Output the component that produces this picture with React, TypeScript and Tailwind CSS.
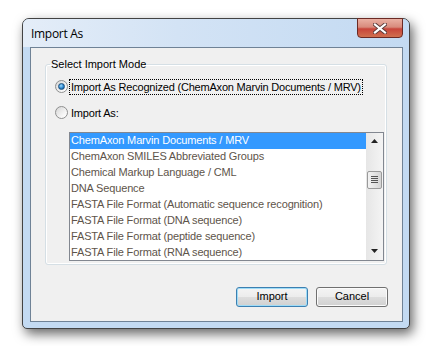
import React from 'react';

const formats = [
  'ChemAxon Marvin Documents / MRV',
  'ChemAxon SMILES Abbreviated Groups',
  'Chemical Markup Language / CML',
  'DNA Sequence',
  'FASTA File Format (Automatic sequence recognition)',
  'FASTA File Format (DNA sequence)',
  'FASTA File Format (peptide sequence)',
  'FASTA File Format (RNA sequence)',
];

function Radio({ checked }: { checked?: boolean }) {
  return (
    <span className="flex h-[13px] w-[13px] shrink-0 items-center justify-center rounded-full border border-[#8e8f8f] bg-[linear-gradient(135deg,#d6d6d6,#f7f7f7_70%,#ffffff)]">
      {checked && (
        <span className="h-[7px] w-[7px] rounded-full border border-[#1d4f7c] bg-[radial-gradient(circle_at_40%_35%,#9fdcff,#2a86cf_55%,#0f4478)]" />
      )}
    </span>
  );
}

function Button({ label, primary }: { label: string; primary?: boolean }) {
  return (
    <button
      className={`flex h-[20px] w-[72px] items-center justify-center rounded-[3px] border bg-[linear-gradient(#f4f4f4,#ececec_50%,#dedede_50%,#d0d0d0)] text-[11px] text-black ${
        primary
          ? 'border-[#3c7fb1] shadow-[inset_0_0_0_1px_#9fdcf7]'
          : 'border-[#707070] shadow-[inset_0_0_0_1px_#fbfbfb]'
      }`}
    >
      {label}
    </button>
  );
}

function ScrollBar() {
  return (
    <div className="flex w-[17px] shrink-0 flex-col items-center bg-[linear-gradient(90deg,#e6e6e6,#f4f4f4)]">
      {/* up arrow */}
      <div className="flex h-[17px] w-full items-center justify-center">
        <svg width="7" height="4" viewBox="0 0 7 4">
          <path d="M3.5 0 L7 4 L0 4 Z" fill="#222" />
        </svg>
      </div>
      <div className="h-[21px]" />
      {/* thumb */}
      <div className="flex h-[18px] w-[15px] flex-col items-center justify-center gap-[1px] rounded-[2px] border border-[#9a9a9a] bg-[linear-gradient(90deg,#f3f3f3,#e4e4e4_50%,#d5d5d5)]">
        <span className="h-[1px] w-[7px] bg-[#555]" />
        <span className="h-[1px] w-[7px] bg-[#555]" />
        <span className="h-[1px] w-[7px] bg-[#555]" />
        <span className="h-[1px] w-[7px] bg-[#555]" />
      </div>
      <div className="flex-1" />
      {/* down arrow */}
      <div className="flex h-[17px] w-full items-center justify-center">
        <svg width="7" height="4" viewBox="0 0 7 4">
          <path d="M0 0 L7 0 L3.5 4 Z" fill="#222" />
        </svg>
      </div>
    </div>
  );
}

export default function App() {
  return (
    <div className="h-[346px] w-[426px] bg-white pl-[22px] pt-[18px] font-['Liberation_Sans',sans-serif] text-[11px]">
      {/* Window */}
      <div className="flex h-[311px] w-[388px] flex-col rounded-t-[7px] rounded-b-[5px] border border-[#434343] bg-[#c3daf2] shadow-[3px_5px_12px_rgba(0,0,0,0.6)]">
        {/* Title bar */}
        <div className="flex h-[28px] items-start rounded-t-[6px] bg-[linear-gradient(90deg,#e4edf8,#d3e3f5_40%,#c3daf2)] pl-[8px] pr-[6px]">
          <span className="mt-[6px] font-['Open_Sans',sans-serif] text-[12px] tracking-[-0.3px] text-black">Import As</span>
          {/* Close button */}
          <div className="-mt-[1px] ml-auto flex h-[20px] w-[46px] items-center justify-center rounded-b-[4px] border border-[#6b2a24] bg-[linear-gradient(#eab0a3,#d88b7c_45%,#c8453a_55%,#d0704f)]">
            <svg width="14" height="11" viewBox="0 0 14 11">
              <path d="M2 1.5 L12 9.5 M12 1.5 L2 9.5" stroke="#5a3a38" strokeWidth="4" strokeLinecap="square" />
              <path d="M2 1.5 L12 9.5 M12 1.5 L2 9.5" stroke="#ffffff" strokeWidth="2.2" strokeLinecap="square" />
            </svg>
          </div>
        </div>

        {/* Client area */}
        <div className="mb-[6px] ml-[7px] mr-[6px] flex flex-1 flex-col border border-[#6f8296] bg-[#f0f0f0]">
          <fieldset className="ml-[14px] mr-[15px] mt-[8px] rounded-[3px] border border-[#d5dfe5] pb-[3px] pl-[4px] pr-[2px] shadow-[inset_0_0_0_1px_#ffffff]">
            <legend className="px-[1px] text-black">Select Import Mode</legend>

            <div className="pl-[19px]">
              <div className="-ml-[14px] mt-[6px] flex items-center gap-[1px]">
                <Radio checked />
                <span className="border border-dotted border-black pl-[1px] pr-[1px] leading-[14px] tracking-[-0.2px]">
                  Import As Recognized (ChemAxon Marvin Documents / MRV)
                </span>
              </div>

              <div className="-ml-[14px] mt-[11px] flex items-center gap-[3px]">
                <Radio />
                <span className="leading-[14px] tracking-[-0.2px]">Import As:</span>
              </div>

              {/* List */}
              <div className="mt-[12px] flex h-[129px] border border-[#828790] bg-white">
                <div className="flex flex-1 flex-col">
                  {formats.map((f, i) => (
                    <div
                      key={f}
                      className={`flex h-[16px] items-center whitespace-nowrap pl-[1px] tracking-[-0.15px] ${
                        i === 0 ? 'bg-[#3399ff] text-white' : 'text-[#5e544a]'
                      }`}
                    >
                      {f}
                    </div>
                  ))}
                </div>
                <ScrollBar />
              </div>
            </div>
          </fieldset>

          <div className="mr-[14px] mt-[22px] flex justify-end gap-[8px]">
            <Button label="Import" primary />
            <Button label="Cancel" />
          </div>
        </div>
      </div>
    </div>
  );
}
